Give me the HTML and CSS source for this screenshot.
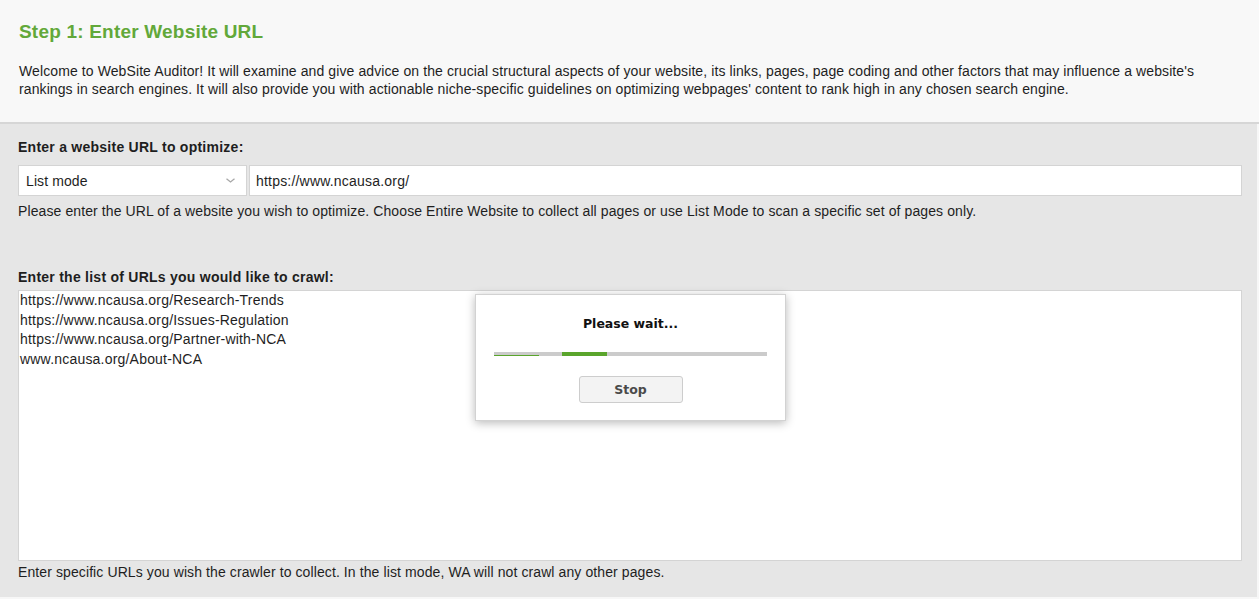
FILE: index.html
```html
<!DOCTYPE html>
<html lang="en">
<head>
    <meta charset="UTF-8">
    <meta name="viewport" content="width=device-width, initial-scale=1.0">
    <title>WebSite Auditor - Step 1</title>
    <link rel="stylesheet" href="styles.css">
</head>
<body>
    <div class="header">
        <h1>Step 1: Enter Website URL</h1>
        <p>Welcome to WebSite Auditor! It will examine and give advice on the crucial structural aspects of your website, its links, pages, page coding and other factors that may influence a website's rankings in search engines. It will also provide you with actionable niche-specific guidelines on optimizing webpages' content to rank high in any chosen search engine.</p>
    </div>

    <div class="main">
        <div class="label">Enter a website URL to optimize:</div>
        <div class="url-row">
            <div class="mode-select">
                <span>List mode</span>
                <svg class="chevron" width="9" height="5" viewBox="0 0 9 5">
                    <polyline points="0.5,0.7 4.5,4 8.5,0.7" fill="none" stroke="#a8a8a8" stroke-width="1.3"/>
                </svg>
            </div>
            <input class="url-input" value="https://www.ncausa.org/">
        </div>
        <div class="hint">Please enter the URL of a website you wish to optimize. Choose Entire Website to collect all pages or use List Mode to scan a specific set of pages only.</div>

        <div class="label list-label">Enter the list of URLs you would like to crawl:</div>
        <!-- urls to crawl -->
        <textarea class="url-list" readonly>https://www.ncausa.org/Research-Trends
https://www.ncausa.org/Issues-Regulation
https://www.ncausa.org/Partner-with-NCA
www.ncausa.org/About-NCA</textarea>
        <div class="hint hint-bottom">Enter specific URLs you wish the crawler to collect. In the list mode, WA will not crawl any other pages.</div>
    </div>

    <div class="wait-dialog">
        <div class="wait-title">Please wait...</div>
        <div class="progress">
            <div class="progress-trail"></div>
            <div class="progress-block"></div>
        </div>
        <button class="stop-button">Stop</button>
    </div>
</body>
</html>
```

FILE: styles.css
```css
html, body {
    margin: 0;
    padding: 0;
    height: 100%;
}
body {
    font-family: "Liberation Sans", Arial, sans-serif;
    font-size: 14px;
    letter-spacing: 0.1px;
    line-height: 18px;
    color: #1e1e1e;
    background: #f7f7f7;
    display: flex;
    flex-direction: column;
}
.header {
    background-color: #f8f8f8;
    padding: 21px 18px 24px 19px;
    border-bottom: 2px solid #d6d6d6;
}
h1 {
    margin: 0;
    font-size: 19px;
    letter-spacing: 0.2px;
    line-height: 22px;
    font-weight: bold;
    color: #62a83a;
}
.header p {
    margin: 19px 0 0 0;
}
.main {
    flex: 1;
    background-color: #e6e6e6;
    padding: 14px 15px 0 18px;
    margin-right: 2px;
    margin-bottom: 2px;
}
.label {
    font-weight: bold;
    letter-spacing: 0.25px;
}
.url-row {
    display: flex;
    gap: 2px;
    margin-top: 9px;
    height: 31px;
}
.mode-select {
    width: 229px;
    box-sizing: border-box;
    background: white;
    border: 1px solid #d4d4d4;
    display: flex;
    align-items: center;
    justify-content: space-between;
    padding: 0 11px 0 7px;
}
.url-input {
    flex: 1;
    box-sizing: border-box;
    height: 31px;
    margin: 0;
    border: 1px solid #d4d4d4;
    background: white;
    padding: 0 6px;
    font-family: "Liberation Sans", Arial, sans-serif;
    font-size: 14px;
    letter-spacing: 0.2px;
    color: #1e1e1e;
    outline: none;
}
.hint {
    margin-top: 6px;
}
.list-label {
    margin-top: 48px;
}
.url-list {
    display: block;
    width: 100%;
    box-sizing: border-box;
    height: 271px;
    margin-top: 4px;
    border: 1px solid #d4d4d4;
    background: white;
    padding: 0 1px;
    font-family: "Liberation Sans", Arial, sans-serif;
    font-size: 14px;
    letter-spacing: 0.2px;
    line-height: 19.7px;
    color: #1e1e1e;
    resize: none;
    outline: none;
    overflow: hidden;
}
.hint-bottom {
    margin-top: 2px;
}
.wait-dialog {
    position: absolute;
    left: 475px;
    top: 294px;
    width: 311px;
    height: 127px;
    box-sizing: border-box;
    background: white;
    border: 1px solid #d2d2d2;
    box-shadow: 0 2px 9px rgba(0, 0, 0, 0.28);
    display: flex;
    flex-direction: column;
    align-items: center;
    font-family: "DejaVu Sans", sans-serif;
    letter-spacing: 0;
}
.wait-title {
    margin-top: 21px;
    font-size: 12.5px;
    line-height: 16px;
    font-weight: bold;
    color: #111;
}
.progress {
    position: relative;
    align-self: flex-start;
    margin: 20px 0 0 18px;
    width: 273px;
    height: 4px;
    background: #cbcbcb;
}
.progress-trail {
    position: absolute;
    left: 0;
    top: 3px;
    width: 45px;
    height: 1px;
    background: #5aa52c;
}
.progress-block {
    position: absolute;
    left: 68px;
    top: 0;
    width: 45px;
    height: 4px;
    background: #5aa52c;
}
.stop-button {
    margin-top: 20px;
    width: 104px;
    height: 27px;
    background: #f3f3f3;
    border: 1px solid #cdcdcd;
    border-radius: 3px;
    font-family: "DejaVu Sans", sans-serif;
    font-size: 12.5px;
    font-weight: bold;
    color: #4a4a4a;
    padding: 0;
}
```
